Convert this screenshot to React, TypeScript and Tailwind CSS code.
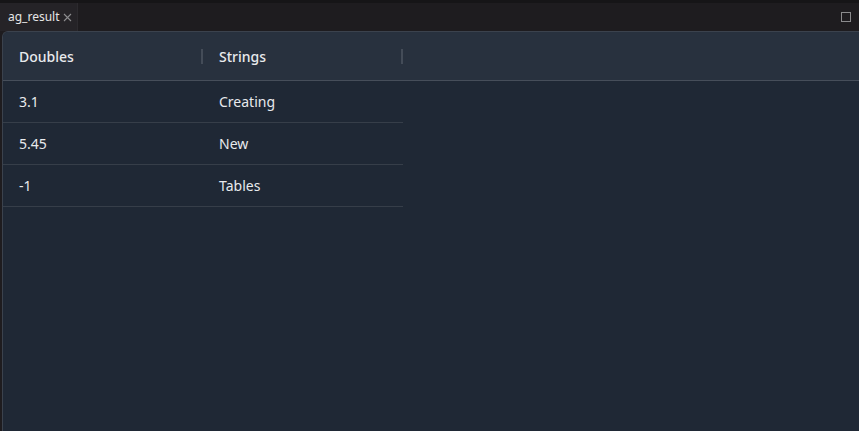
import React from 'react';

const rows = [
    { d: '3.1', s: 'Creating' },
    { d: '5.45', s: 'New' },
    { d: '-1', s: 'Tables' },
];

export default function App() {
    return (
        <div
            className="flex h-[431px] w-[859px] flex-col overflow-hidden bg-[#1e1c1f] text-[14px] text-[#e8eaed]"
            style={{ fontFamily: '"Noto Sans", "Open Sans", sans-serif' }}
        >
            <div className="h-[3px] bg-[#161517]" />
            <div className="flex h-[28px] items-stretch justify-between">
                <div className="flex items-center gap-[3px] border-r border-[#2c2a2e] bg-[#252327] pl-[8px] pr-[5px] text-[12px] text-[#e6e6e6]">
                    <span>ag_result</span>
                    <svg width="9" height="9" viewBox="0 0 9 9" className="mt-[1px]">
                        <path d="M1 1L8 8M8 1L1 8" stroke="#8d8d8f" strokeWidth="1.1" />
                    </svg>
                </div>
                <div className="flex items-center pr-[8px]">
                    <div className="h-[10px] w-[10px] border border-[#8a8a8c]" />
                </div>
            </div>
            <div className="ml-[2px] flex flex-1 flex-col overflow-hidden rounded-tl-[6px] border-l border-t border-[#3b424d] bg-[#1f2835]">
                <div className="flex h-[49px] items-center border-b border-[#464e5a] bg-[#28313e] font-medium">
                    {['Doubles', 'Strings'].map((h) => (
                        <div key={h} className="flex w-[200px] items-center justify-between pl-[16px]">
                            <span>{h}</span>
                            <span className="h-[15px] w-[2px] bg-[#444c58]" />
                        </div>
                    ))}
                </div>
                <div className="w-[400px]">
                    {rows.map((r) => (
                        <div key={r.d} className="flex h-[42px] items-center border-b border-[#363e49]">
                            <div className="w-[200px] pl-[16px]">{r.d}</div>
                            <div className="w-[200px] pl-[16px]">{r.s}</div>
                        </div>
                    ))}
                </div>
            </div>
        </div>
    );
}
